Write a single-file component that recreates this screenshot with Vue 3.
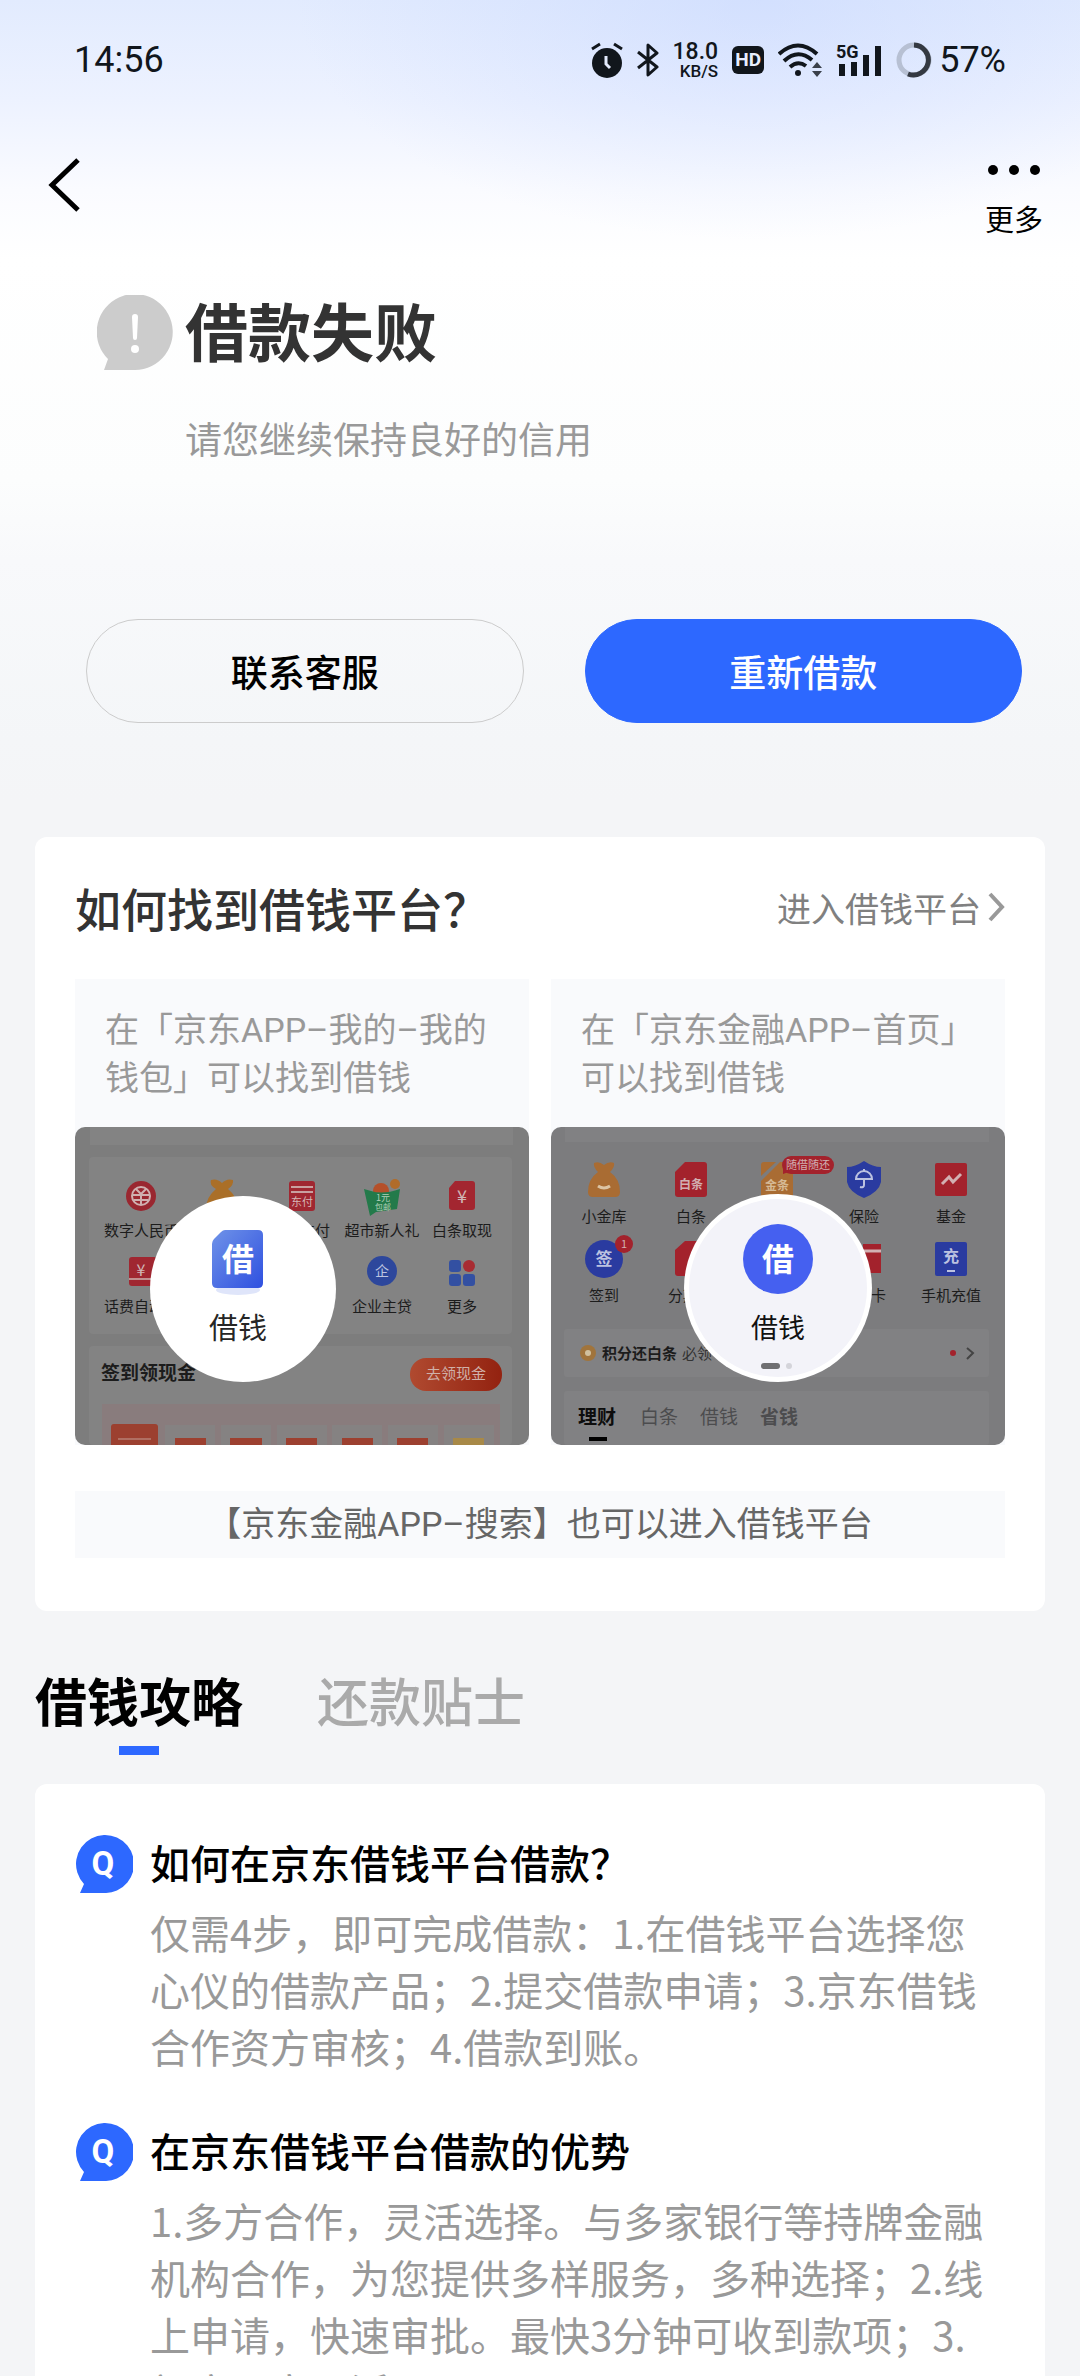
<script setup>
import { ref } from 'vue'

const tabs = ['借钱攻略', '还款贴士']
const activeTab = ref(0)

const questions = [
  {
    title: '如何在京东借钱平台借款？',
    answer: '仅需4步，即可完成借款：1.在借钱平台选择您心仪的借款产品；2.提交借款申请；3.京东借钱合作资方审核；4.借款到账。'
  },
  {
    title: '在京东借钱平台借款的优势',
    answer: '1.多方合作，灵活选择。与多家银行等持牌金融机构合作，为您提供多样服务，多种选择；2.线上申请，快速审批。最快3分钟可收到款项；3.额度可享灵活'
  }
]
</script>

<template>
  <div class="page">
    <header class="status">
      <span class="clock">14:56</span>
      <div class="indicators">
        <svg width="32" height="36" viewBox="0 0 32 36" aria-label="闹钟">
          <circle cx="16" cy="21" r="15" fill="#11161c" />
          <path d="M1 7L9 2M23 2l8 5" stroke="#11161c" stroke-width="3" />
          <path d="M15 14v8l4 4" fill="none" stroke="#e4ebfd" stroke-width="3" />
        </svg>
        <svg width="22" height="36" viewBox="0 0 22 36" aria-label="蓝牙">
          <path d="M1 10l19 15-9 8V3l9 8L1 26" fill="none" stroke="#11161c" stroke-width="3" stroke-linejoin="round" />
        </svg>
        <div class="speed"><b>18.0</b><span>KB/S</span></div>
        <span class="hd">HD</span>
        <svg width="44" height="36" viewBox="0 0 44 36" aria-label="无线网络">
          <g fill="none" stroke="#11161c" stroke-width="4">
            <path d="M1 12Q20-5 39 12" />
            <path d="M6 19Q20 6 34 18" />
            <path d="M12 25Q20 18 28 24" />
          </g>
          <circle cx="20" cy="31" r="3" fill="#11161c" />
          <path d="M34 26l5-6 5 6zM34 29h10l-5 6z" fill="#3a404a" />
        </svg>
        <svg class="signal" width="46" height="36" viewBox="0 0 46 36" aria-label="信号">
          <text x="0" y="16" font-size="18" font-weight="700" fill="#11161c">5G</text>
          <path d="M3 22h6v12H3zM15 20h6v14h-6zM27 13h6v21h-6zM39 4h6v30h-6z" fill="#11161c" />
        </svg>
        <div class="battery">
          <svg width="36" height="36" viewBox="0 0 36 36" aria-label="电量">
            <circle cx="18" cy="18" r="15" fill="none" stroke="#b7c0d3" stroke-width="5" />
            <path d="M18 3a15 15 0 1 1-6 29" fill="none" stroke="#343942" stroke-width="5" />
          </svg>
          <span>57%</span>
        </div>
      </div>
    </header>

    <nav class="nav">
      <button class="back" aria-label="返回">
        <svg width="32" height="54" viewBox="0 0 32 54">
          <path d="M30 2L4 27l26 25" fill="none" stroke="#000" stroke-width="5" />
        </svg>
      </button>
      <button class="more">
        <svg width="54" height="12" viewBox="0 0 54 12">
          <circle cx="6" cy="6" r="5" /><circle cx="27" cy="6" r="5" /><circle cx="48" cy="6" r="5" />
        </svg>
        <span>更多</span>
      </button>
    </nav>

    <main>
      <section class="result">
        <svg class="fail" width="76" height="76" viewBox="0 0 76 76" aria-hidden="true">
          <path d="M7 75l4-11A38 38 0 1 1 38 75z" fill="#ccc" />
          <path d="M35 22q0-3 3-3t3 3l-1 21q0 2-2 2t-2-2z" fill="#fff" />
          <circle cx="38" cy="54" r="4" fill="#fff" />
        </svg>
        <div>
          <h1>借款失败</h1>
          <p>请您继续保持良好的信用</p>
        </div>
      </section>

      <div class="actions">
        <button class="btn">联系客服</button>
        <button class="btn primary">重新借款</button>
      </div>

      <section class="card guide">
        <div class="guide-head">
          <h2>如何找到借钱平台？</h2>
          <a href="#">进入借钱平台<svg width="18" height="32" viewBox="0 0 18 32"><path d="M3 3l12 13L3 29" fill="none" stroke="#999" stroke-width="4" /></svg></a>
        </div>
        <div class="ways">
          <figure>
            <figcaption>在「京东APP–我的–我的钱包」可以找到借钱</figcaption>
            <svg class="scene" viewBox="0 0 454 318">
              <defs>
                <linearGradient id="doc" x1="0" y1="0" x2="1" y2="1">
                  <stop offset="0" stop-color="#6f93e8" /><stop offset="1" stop-color="#2f50e0" />
                </linearGradient>
                <linearGradient id="cash"><stop offset="0" stop-color="#b04a30" /><stop offset="1" stop-color="#932210" /></linearGradient>
              </defs>
              <rect width="454" height="318" fill="#7d7d7d" />
              <g fill="#838383">
                <rect x="15" width="423" height="18" /><rect x="14" y="30" width="423" height="177" rx="4" />
                <rect x="14" y="219" width="423" height="99" rx="4" />
              </g>
              <circle cx="66" cy="69" r="15" fill="#9a2730" />
              <g fill="none" stroke="#d0b0b0" stroke-width="2">
                <circle cx="66" cy="69" r="9" /><path d="M61 62l5 5 5-5M58 68h16M59 73h14M66 67v10" />
              </g>
              <path d="M136 53q6-2 11 3 5-5 11-3 1 5-5 9 10 8 10 20h-32q0-12 10-20-7-4-5-9z" fill="#aa6f28" />
              <rect x="214" y="54" width="26" height="30" rx="3" fill="#a02731" />
              <path d="M216 60h22M216 65h22" stroke="#c9a0a0" stroke-width="2" />
              <text x="227" y="79" class="mid" font-size="11" fill="#d5b6b6">东付</text>
              <circle cx="306" cy="64" r="8" fill="#b5502a" /><circle cx="320" cy="57" r="5" fill="#b06c2a" />
              <path d="M289 62l7 2q12 4 29-2l-3 20-21 3-6 4z" fill="#237a4a" />
              <text x="308" y="74" class="mid" font-size="9" fill="#b2d0b8">1元</text>
              <text x="308" y="83" class="mid" font-size="8" fill="#b2d0b8">包邮</text>
              <path d="M380 54h17q3 0 3 3v23q0 3-3 3h-20q-3 0-3-3V61z" fill="#a32630" />
              <text x="387" y="76" class="mid" font-size="18" fill="#d0b6b6">¥</text>
              <g class="label" font-size="15">
                <text x="29" y="109">数字人民币</text><text x="255" y="109" text-anchor="end">京东支付</text>
                <text x="307" y="109" class="mid">超市新人礼</text><text x="387" y="109" class="mid">白条取现</text>
                <text x="29" y="185">话费自动充</text><text x="307" y="185" class="mid">企业主贷</text>
                <text x="387" y="185" class="mid">更多</text>
                <text x="26" y="253" font-size="19" font-weight="700">签到领现金</text>
              </g>
              <rect x="54" y="130" width="28" height="29" rx="3" fill="#a02731" />
              <path d="M54 152h28" stroke="#c09090" stroke-width="2" />
              <text x="66" y="149" class="mid" font-size="16" fill="#d0b6b6">¥</text>
              <circle cx="307" cy="144" r="15" fill="#2d479c" />
              <text x="307" y="149" class="mid" font-size="14" fill="#bcc4e0">企</text>
              <g fill="#3350a2">
                <rect x="374" y="133" width="12" height="12" rx="3" /><rect x="374" y="147" width="12" height="12" rx="3" />
                <rect x="388" y="147" width="12" height="12" rx="3" /><circle cx="394" cy="139" r="6" fill="#a82c32" />
              </g>
              <rect x="335" y="231" width="92" height="33" rx="16" fill="url(#cash)" />
              <text x="381" y="252" class="mid" font-size="15" fill="#d0b0a8">去领现金</text>
              <rect x="27" y="277" width="398" height="41" fill="#897c7d" />
              <g fill="#858282">
                <rect x="90" y="298" width="50" height="20" /><rect x="146" y="298" width="50" height="20" />
                <rect x="202" y="298" width="50" height="20" /><rect x="257" y="298" width="50" height="20" />
                <rect x="313" y="298" width="50" height="20" /><rect x="369" y="298" width="50" height="20" />
              </g>
              <g fill="#9c4030">
                <path d="M36 318v-18q0-3 3-3h41q3 0 3 3v18z" />
                <path d="M100 311h31v7h-31zM155 311h32v7h-32zM211 311h31v7h-31zM267 311h31v7h-31zM322 311h31v7h-31z" />
              </g>
              <path d="M43 312h33" stroke="#b06f62" stroke-width="2" />
              <path d="M378 311h31v7h-31z" fill="#a88948" />
              <circle cx="168" cy="162" r="93" fill="#fff" />
              <ellipse cx="163" cy="163" rx="22" ry="5" fill="#dfe5fa" />
              <path d="M150 103h33q5 0 5 5v48q0 5-5 5h-41q-5 0-5-5v-39q0-3 2-5l7-7q2-2 4-2z" fill="url(#doc)" />
              <text x="163" y="144" class="mid" font-size="32" font-weight="700" fill="#fff">借</text>
              <text x="163" y="212" class="mid" font-size="29" fill="#262626">借钱</text>
            </svg>
          </figure>
          <figure>
            <figcaption>在「京东金融APP–首页」可以找到借钱</figcaption>
            <svg class="scene" viewBox="0 0 454 318">
              <rect width="454" height="318" fill="#7c7c7e" />
              <g fill="#818183">
                <rect x="14" width="424" height="15" /><rect x="13" y="202" width="425" height="48" rx="3" />
                <rect x="13" y="264" width="425" height="54" rx="3" />
              </g>
              <path d="M43 36q5-2 10 2 5-4 10-2 1 4-4 9 10 7 10 20 0 5-5 5H42q-5 0-5-5 0-13 10-20-5-5-4-9z" fill="#a96c33" />
              <path d="M47 59q6 4 12 0" fill="none" stroke="#dcc4a4" stroke-width="3" />
              <path d="M134 35h19q3 0 3 3v29q0 3-3 3h-26q-3 0-3-3V45z" fill="#a3222c" />
              <text x="140" y="62" class="mid" font-size="12" font-weight="700" fill="#d2b0b2">白条</text>
              <path d="M229 35h10q3 0 3 3v32h-32V54z" fill="#a96c33" />
              <path d="M210 49l15-14h-12q-3 0-3 3z" fill="#a96c33" />
              <text x="226" y="63" class="mid" font-size="12" font-weight="700" fill="#d6ba96">金条</text>
              <rect x="231" y="29" width="52" height="18" rx="9" fill="#a3222c" /><path d="M232 38v9l6-2z" fill="#a3222c" />
              <text x="257" y="42" class="mid" font-size="11" fill="#d2b0b2">随借随还</text>
              <path d="M313 34q9 6 17 6v15q-2 10-17 16-15-6-17-16V40q8 0 17-6z" fill="#2a3ba0" />
              <path d="M305 52a8 8 0 0 1 16 0zM313 52v6q0 3-4 2M313 42v3" fill="none" stroke="#bcc2e0" stroke-width="2" />
              <rect x="384" y="36" width="32" height="33" rx="2" fill="#a3222c" />
              <path d="M391 57l7-7 4 5 8-8" fill="none" stroke="#d2b0b2" stroke-width="3" />
              <circle cx="53" cy="132" r="19" fill="#2a3ba0" />
              <text x="53" y="138" class="mid" font-size="17" font-weight="700" fill="#bcc2e0">签</text>
              <circle cx="73" cy="117" r="9" fill="#a3222c" />
              <text x="73" y="121" class="mid" font-size="11" fill="#d2b0b2">1</text>
              <path d="M134 114h22v35h-29q-3 0-3-3v-23z" fill="#a3222c" />
              <path d="M312 117h18v29h-18z" fill="#a3222c" /><path d="M312 124h18" stroke="#d2b0b2" stroke-width="3" />
              <rect x="384" y="115" width="32" height="34" rx="2" fill="#2a3ba0" />
              <text x="400" y="135" class="mid" font-size="16" font-weight="700" fill="#bcc2e0">充</text>
              <path d="M396 144h8" stroke="#bcc2e0" stroke-width="2" />
              <g class="label" font-size="15">
                <text x="53" y="95" class="mid">小金库</text><text x="140" y="95" class="mid">白条</text>
                <text x="313" y="95" class="mid">保险</text><text x="400" y="95" class="mid">基金</text>
                <text x="53" y="174" class="mid">签到</text><text x="117" y="174">分期</text>
                <text x="335" y="174" text-anchor="end">信用卡</text><text x="400" y="174" class="mid">手机充值</text>
                <text x="51" y="232" font-weight="700">积分还白条</text><text x="131" y="232" fill="#333">必领</text>
              </g>
              <circle cx="37" cy="226" r="8" fill="#a0743c" /><circle cx="37" cy="226" r="3" fill="#d0c09e" />
              <circle cx="402" cy="226" r="3" fill="#a3222c" />
              <path d="M416 221l6 5-6 6" fill="none" stroke="#444" stroke-width="2" />
              <g font-size="19" fill="#4c4c4e">
                <text x="27" y="297" font-weight="700" fill="#0d0d0d">理财</text><text x="89" y="297">白条</text>
                <text x="149" y="297">借钱</text><text x="209" y="297" font-weight="700">省钱</text>
              </g>
              <rect x="38" y="310" width="18" height="4" fill="#000" />
              <circle cx="227" cy="161" r="94" fill="#fff" /><circle cx="227" cy="161" r="89" fill="#f3f3f9" />
              <circle cx="227" cy="132" r="35" fill="#4560f0" />
              <text x="227" y="144" class="mid" font-size="32" font-weight="700" fill="#fff">借</text>
              <text x="227" y="211" class="mid" font-size="27" fill="#111">借钱</text>
              <rect x="210" y="236" width="19" height="6" rx="3" fill="#6f6f72" /><circle cx="238" cy="239" r="3" fill="#d4d4da" />
            </svg>
          </figure>
        </div>
        <p class="hint">【京东金融APP–搜索】也可以进入借钱平台</p>
      </section>

      <div class="tabs" role="tablist">
        <button v-for="(tab, i) in tabs" :key="tab" role="tab" :aria-selected="i === activeTab"
          :class="{ active: i === activeTab }" @click="activeTab = i">{{ tab }}</button>
      </div>

      <section class="card faq">
        <article v-for="q in questions" :key="q.title">
          <svg width="58" height="58" viewBox="0 0 58 58" aria-hidden="true">
            <path d="M5 58l4-9A29 29 0 1 1 29 58z" fill="#2d68ff" />
            <text x="28" y="40" class="mark mid">Q</text>
          </svg>
          <div>
            <h3>{{ q.title }}</h3>
            <p>{{ q.answer }}</p>
          </div>
        </article>
      </section>
    </main>
  </div>
</template>

<style>
body {
  background: #f4f5f7;
}
</style>

<style scoped>
.page {
  height: 100vh;
  overflow: hidden;
  font-family: "Noto Sans CJK SC", sans-serif;
  color: #000;
  background:
    radial-gradient(ellipse 460px 240px at 70% 0, rgba(192, 210, 255, 0.45), transparent),
    linear-gradient(#e2ebfe 0, #edf2ff 100px, #fafbff 190px, #fff 260px, #fcfdfd 480px, #f8f9fb 560px, #f4f6f8 740px, #f4f5f7 800px);
}
h1, h2, h3, p, figure {
  margin: 0;
}
button {
  padding: 0;
  border: 0;
  background: none;
  font-family: inherit;
  color: inherit;
}
svg {
  display: block;
  flex: none;
}
.status {
  display: flex;
  align-items: center;
  justify-content: space-between;
  height: 120px;
  padding: 0 74px;
  font-family: Roboto, sans-serif;
  color: #11161c;
}
.clock, .battery {
  font-size: 36px;
}
.indicators {
  display: flex;
  align-items: center;
  gap: 14px;
}
.speed {
  display: flex;
  flex-direction: column;
  align-items: flex-end;
  font-size: 17px;
  line-height: 17px;
  font-weight: 500;
}
.speed b {
  font-size: 23px;
  line-height: 23px;
  font-weight: 500;
}
.hd {
  width: 32px;
  border-radius: 6px;
  background: #11161c;
  color: #e8eeff;
  font-size: 19px;
  line-height: 28px;
  font-weight: 700;
  text-align: center;
}
.signal {
  overflow: visible;
}
.battery {
  display: flex;
  align-items: center;
  gap: 7px;
}
.nav {
  display: flex;
  justify-content: space-between;
  align-items: flex-start;
  height: 120px;
  padding: 0 37px 0 48px;
}
.back {
  margin-top: 38px;
}
.more {
  display: flex;
  flex-direction: column;
  align-items: center;
  gap: 22px;
  margin-top: 44px;
  font-size: 29px;
  line-height: 40px;
}
.result {
  display: flex;
  gap: 12px;
  padding: 55px 97px 0;
}
h1 {
  font-size: 63px;
  line-height: 67px;
  color: #333;
}
.result p {
  margin-top: 51px;
  font-size: 37px;
  line-height: 50px;
  color: #999;
}
.actions {
  display: flex;
  gap: 61px;
  padding: 156px 58px 114px 86px;
}
.btn {
  flex: 1;
  height: 104px;
  border: 1px solid #ccc;
  border-radius: 52px;
  font-size: 37px;
  line-height: 50px;
  font-weight: 500;
}
.primary {
  border-color: #2d68ff;
  background: #2d68ff;
  color: #fff;
}
.card {
  margin: 0 35px;
  border-radius: 12px;
  background: #fff;
}
.guide {
  padding: 40px 40px 53px;
}
.guide-head {
  display: flex;
  justify-content: space-between;
  align-items: center;
}
h2 {
  font-size: 46px;
  line-height: 60px;
  font-weight: 500;
  color: #333;
}
.guide a {
  display: flex;
  align-items: center;
  gap: 6px;
  font-size: 34px;
  color: #808080;
  text-decoration: none;
}
.ways {
  display: flex;
  gap: 22px;
  margin: 42px 0 46px;
}
figure {
  flex: 1;
  background: #f9fafc;
}
figcaption {
  padding: 27px 30px 25px;
  font-family: Roboto, "Noto Sans CJK SC", sans-serif;
  font-size: 34px;
  line-height: 48px;
  color: #999;
}
.scene {
  width: 100%;
  border-radius: 10px;
}
.mid {
  text-anchor: middle;
}
.label {
  fill: #1c1c1c;
}
.hint {
  background: #f9fafc;
  font-family: Roboto, "Noto Sans CJK SC", sans-serif;
  font-size: 34px;
  line-height: 67px;
  color: #666;
  text-align: center;
}
.tabs {
  display: flex;
  gap: 74px;
  padding: 59px 35px 29px;
}
.tabs button {
  font-size: 52px;
  line-height: 60px;
  font-weight: 500;
  color: #aaa;
}
.tabs button::after {
  content: "";
  display: block;
  width: 40px;
  height: 9px;
  margin: 16px auto 0;
}
.tabs .active {
  font-weight: 700;
  color: #000;
}
.tabs .active::after {
  background: #2d68ff;
}
.faq {
  display: flex;
  flex-direction: column;
  gap: 47px;
  padding: 51px 50px 51px 40px;
}
article {
  display: flex;
  gap: 17px;
}
.mark {
  font-family: Roboto, sans-serif;
  font-size: 33px;
  font-weight: 700;
  fill: #fff;
}
h3 {
  font-size: 40px;
  line-height: 54px;
  font-weight: 500;
}
article p {
  margin-top: 15px;
  margin-bottom: 1px;
  font-size: 40px;
  line-height: 57px;
  color: #999;
}
</style>
